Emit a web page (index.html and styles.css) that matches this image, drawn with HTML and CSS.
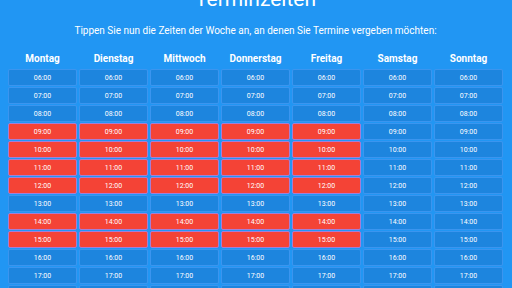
FILE: index.html
```html
<!DOCTYPE html>
<html lang="de">
<head>
    <meta charset="UTF-8">
    <meta name="viewport" content="width=device-width, initial-scale=1.0">
    <title>Terminzeiten</title>
    <link rel="stylesheet" href="styles.css">
</head>
<body>
    <main class="page">
        <h1 class="title">Terminzeiten</h1>
        <p class="intro">Tippen Sie nun die Zeiten der Woche an, an denen Sie Termine vergeben möchten:</p>
        <div id="week" class="week"></div>
    </main>

    <script>
        const days = ['Montag', 'Dienstag', 'Mittwoch', 'Donnerstag', 'Freitag', 'Samstag', 'Sonntag'];
        const picked = [9, 10, 11, 12, 14, 15];
        const week = document.getElementById('week');

        days.forEach(function (day, d) {
            const col = document.createElement('div');
            col.className = 'day';
            let html = '<div class="day-name">' + day + '</div>';
            for (let h = 6; h <= 20; h++) {
                const on = d < 5 && picked.includes(h);
                const label = (h < 10 ? '0' : '') + h + ':00';
                html += '<button type="button" class="slot' + (on ? ' active' : '') + '">' + label + '</button>';
            }
            col.innerHTML = html;
            week.appendChild(col);
        });

        week.addEventListener('click', function (e) {
            if (e.target.classList.contains('slot')) {
                e.target.classList.toggle('active');
            }
        });
    </script>
</body>
</html>
```

FILE: styles.css
```css
/* General Styles */
body {
    font-family: 'Roboto', 'Liberation Sans', sans-serif;
    margin: 0;
    padding: 0;
    background-color: #2196f3;
    color: white;
    overflow: hidden;
}
.page {
    padding: 0 9px 0 8px;
}
.title {
    margin: -14px 0 0;
    font-size: 21px;
    font-weight: 400;
    line-height: 26px;
    text-align: center;
}
.intro {
    margin: 12px 0 0;
    font-size: 10px;
    line-height: 13px;
    text-align: center;
}
.week {
    display: grid;
    grid-template-columns: repeat(7, 1fr);
    gap: 2px;
    margin-top: 15px;
}
.day {
    display: flex;
    flex-direction: column;
    gap: 1px;
}
.day-name {
    font-size: 10px;
    font-weight: 700;
    text-align: center;
    line-height: 13px;
    margin-bottom: 3px;
}
.slot {
    height: 17px;
    padding: 0;
    border: 1px solid rgba(80, 160, 250, 0.6);
    border-radius: 2px;
    background-color: #1d85de;
    color: white;
    font-family: inherit;
    font-size: 7px;
    cursor: pointer;
}
.slot.active {
    background-color: #f44336;
    border-color: #a57ed6;
}
```
